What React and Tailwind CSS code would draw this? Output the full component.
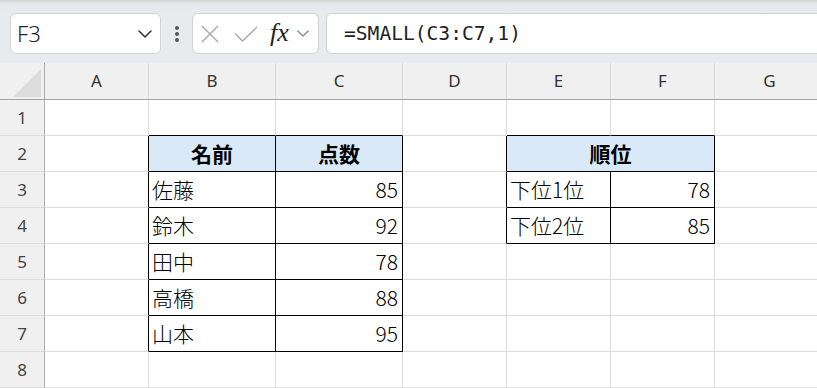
import { Fragment } from "react";

// column widths (incl. the 1px gridline on the right)
const COLS = [
  { key: "A", w: 104 },
  { key: "B", w: 127 },
  { key: "C", w: 127 },
  { key: "D", w: 104 },
  { key: "E", w: 104 },
  { key: "F", w: 104 },
  { key: "G", w: 110 },
];

const GRID = "#dcdcdc";
const INK = "#000000";

const jp = "font-['Noto_Sans_CJK_JP','Noto_Sans',sans-serif]";

// every cell only draws its right and bottom edge, like the sheet gridlines
const Cell = ({ w, right = GRID, bottom = GRID, bg, align = "left", bold, children }) => (
  <div
    className={`h-full shrink-0 border-r border-b flex items-center ${jp} text-[21px] text-black leading-none ${
      align === "right" ? "justify-end pr-[4px]" : align === "center" ? "justify-center" : "justify-start pl-[3px]"
    } ${bold ? "font-bold" : "font-light"}`}
    style={{ width: w, borderRightColor: right, borderBottomColor: bottom, background: bg }}
  >
    {children}
  </div>
);

const HEAD_BG = "#dae9f8";

const ranking = [
  { name: "佐藤", score: 85, label: "下位1位", value: 78 },
  { name: "鈴木", score: 92, label: "下位2位", value: 85 },
  { name: "田中", score: 78 },
  { name: "高橋", score: 88 },
  { name: "山本", score: 95 },
];

const RowHead = ({ n }) => (
  <div className="w-[45px] h-full shrink-0 bg-[#f0f0f0] border-r border-r-[#acacac] border-b border-b-[#dcdcdc] flex items-center justify-center font-['Noto_Sans',sans-serif] text-[17px] text-[#444]">
    {n}
  </div>
);

const Chevron = ({ className }) => (
  <svg viewBox="0 0 14 8" className={className} fill="none" stroke="currentColor" strokeWidth="1.5" strokeLinecap="round" strokeLinejoin="round">
    <path d="M1 1l6 6 6-6" />
  </svg>
);

export default function App() {
  const row1 = (
    <div className="flex h-[36px]">
      <RowHead n={1} />
      <Cell w={104} />
      <Cell w={127} bottom={INK} />
      <Cell w={127} bottom={INK} />
      <Cell w={104} />
      <Cell w={104} bottom={INK} />
      <Cell w={104} bottom={INK} />
      <Cell w={110} />
    </div>
  );

  const row2 = (
    <div className="flex h-[36px]">
      <RowHead n={2} />
      <Cell w={104} right={INK} />
      <Cell w={127} right={INK} bottom={INK} bg={HEAD_BG} align="center" bold>名前</Cell>
      <Cell w={127} right={INK} bottom={INK} bg={HEAD_BG} align="center" bold>点数</Cell>
      <Cell w={104} right={INK} />
      <Cell w={208} right={INK} bottom={INK} bg={HEAD_BG} align="center" bold>順位</Cell>
      <Cell w={110} />
    </div>
  );

  return (
    <div className="w-[817px] h-[388px] overflow-hidden bg-[#e9eaed] select-none">
      {/* ribbon shadow */}
      <div className="h-[13px] bg-gradient-to-b from-[#d5d5d5] via-[#e7e8eb] via-30% to-[#e9eaed]" />

      {/* formula bar */}
      <div className="flex items-stretch h-[41px] pl-[10px]">
        <div className="w-[151px] shrink-0 bg-white border border-[#d2d2d2] rounded-[6px] flex items-center justify-between pl-[6px] pr-[8px]">
          <span className="font-['Noto_Sans',sans-serif] text-[22px] text-[#222] font-light">F3</span>
          <Chevron className="w-[14px] h-[8px] text-[#333]" />
        </div>
        <div className="w-[31px] shrink-0 flex flex-col items-center justify-center gap-[2px]">
          <span className="w-[4px] h-[4px] rounded-full bg-[#555]" />
          <span className="w-[4px] h-[4px] rounded-full bg-[#555]" />
          <span className="w-[4px] h-[4px] rounded-full bg-[#555]" />
        </div>
        <div className="w-[127px] shrink-0 bg-white border border-[#d2d2d2] rounded-[6px] flex items-center pl-[8px]">
          <svg viewBox="0 0 18 18" className="w-[18px] h-[18px] text-[#a8a8a8]" fill="none" stroke="currentColor" strokeWidth="1.4">
            <path d="M1 1l16 16M17 1L1 17" />
          </svg>
          <svg viewBox="0 0 24 16" className="w-[24px] h-[16px] ml-[15px] text-[#a8a8a8]" fill="none" stroke="currentColor" strokeWidth="1.4">
            <path d="M1 7.5l7.5 7.5L23 1" />
          </svg>
          <span className="ml-[12px] font-['Liberation_Serif',serif] italic text-[26px] text-[#222] leading-none -mt-[2px]">fx</span>
          <Chevron className="ml-[8px] w-[12px] h-[7px] text-[#888]" />
        </div>
        <div className="flex-1 -mr-[12px] ml-[7px] bg-white border border-[#d2d2d2] rounded-[6px] flex items-center pl-[17px]">
          <span className="font-['DejaVu_Sans_Mono',monospace] text-[19.6px] text-[#222]">=SMALL(C3:C7,1)</span>
        </div>
      </div>

      <div className="h-[9px]" />

      {/* column headers */}
      <div className="flex h-[37px] bg-[#f0f0f0] border-b border-b-[#a3a3a3]">
        <div className="w-[45px] h-full shrink-0 border-r border-r-[#acacac] flex items-end justify-end pr-[3px] pb-[2px]">
          <svg viewBox="0 0 28 28" className="w-[28px] h-[28px]">
            <path d="M28 0V28H0Z" fill="#dcdcdc" />
          </svg>
        </div>
        {COLS.map((c) => (
          <div
            key={c.key}
            className="h-full shrink-0 border-r border-r-[#d8d8d8] flex items-center justify-center font-['Noto_Sans',sans-serif] text-[17px] text-[#333]"
            style={{ width: c.w }}
          >
            {c.key}
          </div>
        ))}
      </div>

      <div className="bg-white">
        {row1}
        {row2}
        {ranking.map((r, i) => (
          <Fragment key={r.name}>
            <div className="flex h-[36px]">
              <RowHead n={i + 3} />
              <Cell w={104} right={INK} />
              <Cell w={127} right={INK} bottom={INK}>{r.name}</Cell>
              <Cell w={127} right={INK} bottom={INK} align="right">{r.score}</Cell>
              <Cell w={104} right={r.label ? INK : GRID} />
              {r.label ? (
                <>
                  <Cell w={104} right={INK} bottom={INK}>{r.label}</Cell>
                  <Cell w={104} right={INK} bottom={INK} align="right">{r.value}</Cell>
                </>
              ) : (
                <>
                  <Cell w={104} />
                  <Cell w={104} />
                </>
              )}
              <Cell w={110} />
            </div>
          </Fragment>
        ))}
        <div className="flex h-[36px]">
          <RowHead n={8} />
          {COLS.map((c) => (
            <Cell key={c.key} w={c.w} />
          ))}
        </div>
      </div>
    </div>
  );
}
